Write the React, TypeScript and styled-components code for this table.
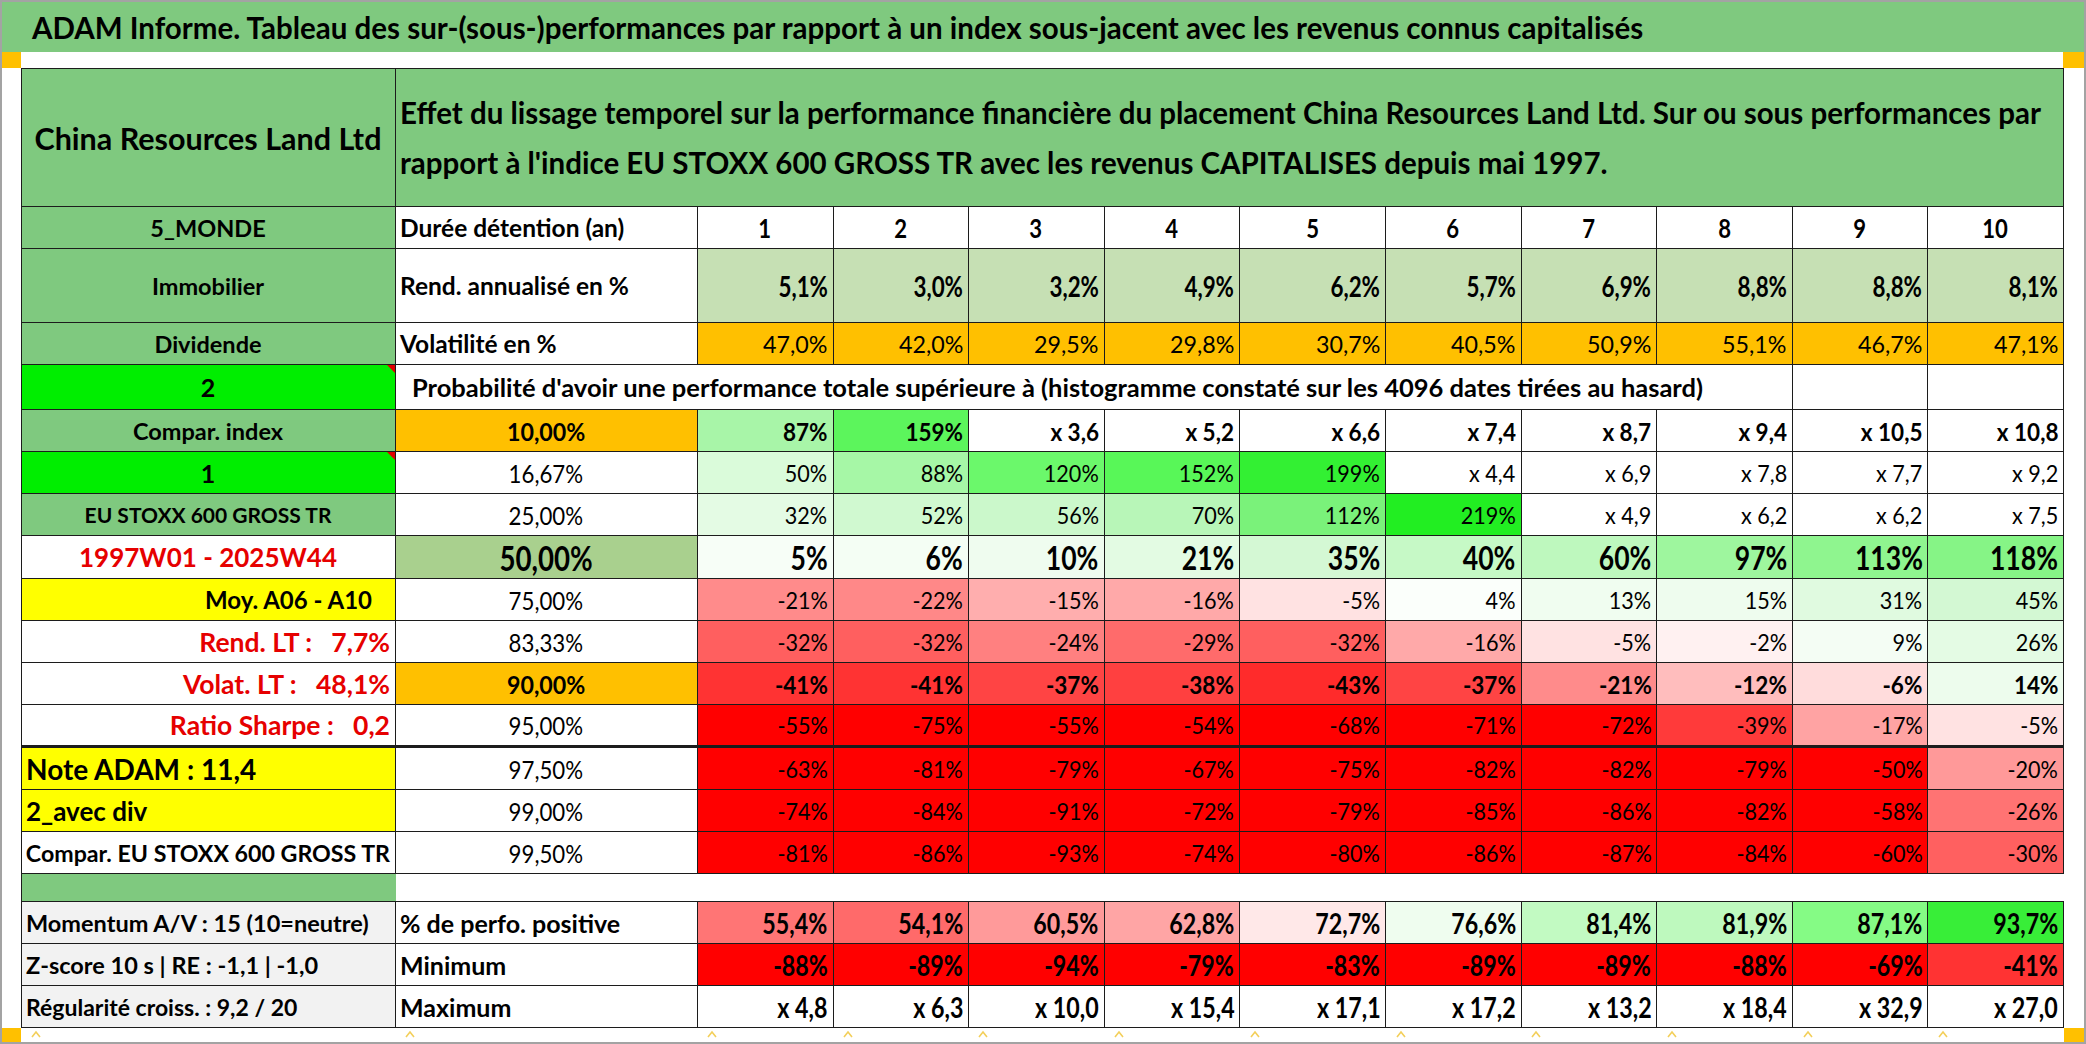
import React from 'react';
import styled, { createGlobalStyle } from 'styled-components';

const FONT = `Lato, "Open Sans", "Liberation Sans", sans-serif`;
const GREEN = '#7fc97f';
const LIME = '#00ee00';
const ORANGE = '#ffc000';
const YELLOW = '#ffff00';
const GREY = '#f2f2f2';
const R = '#ff0000';
const W = '#ffffff';
const LINE = '#1c1c1c';

const GlobalStyle = createGlobalStyle`
  body {
    margin: 0;
    background: #ffffff;
    font-family: ${FONT};
    color: #000000;
  }
`;

const Frame = styled.div`
  width: 2086px;
  height: 1044px;
  box-sizing: border-box;
  border: 2px solid #a3a3a3;
  display: flex;
  flex-direction: column;
  overflow: hidden;
`;

const TitleBar = styled.div`
  height: 50px;
  flex: none;
  background: ${GREEN};
  display: flex;
  align-items: center;
  padding-left: 30px;
  font-size: 29.5px;
  font-weight: 700;
  white-space: nowrap;
`;

const HandleRow = styled.div<{ $h: number }>`
  height: ${(p) => p.$h}px;
  flex: none;
  display: flex;
  align-items: stretch;
`;

const Handle = styled.div<{ $w: number }>`
  width: ${(p) => p.$w}px;
  flex: none;
  background: ${ORANGE};
`;

const Body = styled.div`
  display: flex;
  flex: none;
`;

const Gutter = styled.div<{ $w?: number }>`
  width: ${(p) => (p.$w ? `${p.$w}px` : 'auto')};
  flex: ${(p) => (p.$w ? 'none' : '1')};
`;

const COLS = '374px 302px repeat(4, 1fr) 146px repeat(5, 1fr)';

const Sheet = styled.div`
  width: 2043px;
  flex: none;
  box-sizing: border-box;
  display: grid;
  grid-template-columns: ${COLS};
  grid-template-rows: 138px 42px 74px 42px 45px 42px 42px 42px 43px 42px 42px 42px 43px 42px 42px 42px 28px 42px 42px 42px;
  border-top: 1px solid ${LINE};
  border-left: 1px solid ${LINE};
`;

const MarkStrip = styled.div`
  width: 2043px;
  flex: none;
  display: grid;
  grid-template-columns: ${COLS};
`;

const Mark = styled.div`
  padding-left: 9px;
  svg {
    display: block;
    margin-top: 2px;
  }
`;

type Align = 'left' | 'center' | 'right';
const justify = { left: 'flex-start', center: 'center', right: 'flex-end' };
const origin = { left: 'left center', center: 'center', right: 'right center' };

// Excel's narrow, tall figures: text is drawn at full height then squeezed sideways
const Txt = styled.span`
  display: inline-block;
`;

type CellProps = {
  $bg?: string;
  $align?: Align;
  $size?: number;
  $bold?: boolean;
  $color?: string;
  $span?: number;
  $thick?: boolean;
  $padL?: number;
  $padR?: number;
  $sq?: number;
};

const Cell = styled.div<CellProps>`
  position: relative;
  box-sizing: border-box;
  display: flex;
  align-items: center;
  justify-content: ${(p) => justify[p.$align ?? 'right']};
  grid-column: span ${(p) => p.$span ?? 1};
  background: ${(p) => p.$bg ?? W};
  color: ${(p) => p.$color ?? '#000'};
  font-size: ${(p) => p.$size ?? 23.5}px;
  font-weight: ${(p) => (p.$bold ? 700 : 400)};
  padding-left: ${(p) => p.$padL ?? 4}px;
  padding-right: ${(p) => p.$padR ?? 5}px;
  border-right: 1px solid ${LINE};
  border-bottom: ${(p) => (p.$thick ? 3 : 1)}px solid ${LINE};
  white-space: nowrap;
  overflow: hidden;

  & > ${Txt} {
    flex: none;
    transform: scaleX(${(p) => p.$sq ?? 1});
    transform-origin: ${(p) => origin[p.$align ?? 'right']};
  }
`;

const IntroCell = styled(Cell)`
  line-height: 50px;
  font-size: 29.5px;
  font-weight: 700;
  padding-left: 4px;
`;

const Gap = styled.div<{ $bg?: string; $span?: number }>`
  grid-column: span ${(p) => p.$span ?? 1};
  background: ${(p) => p.$bg ?? W};
  border-bottom: 1px solid ${LINE};
`;

const CommentMark = styled.i`
  position: absolute;
  top: 0;
  right: 0;
  width: 0;
  height: 0;
  border-left: 8px solid transparent;
  border-top: 8px solid #e00000;
`;

type Val = [string, string];
type DataRow = {
  label: string;
  labelProps: CellProps;
  key: string;
  keyProps: CellProps;
  values: Val[];
  valueProps: CellProps;
  mark?: boolean;
  thick?: boolean;
};

const red = (list: string[], last: Val): Val[] => [...list.map((t) => [t, R] as Val), last];
const plain = (list: string[]): Val[] => list.map((t) => [t, W] as Val);

const REG: CellProps = { $size: 23.5, $sq: 0.92 };
const BOLD: CellProps = { $bold: true, $size: 25, $sq: 0.9 };
const BIG: CellProps = { $bold: true, $size: 28, $sq: 0.83 };
const PCT: CellProps = { $align: 'center', $size: 25, $sq: 0.89 };
const PCT_BOLD: CellProps = { $align: 'center', $bold: true, $size: 25, $sq: 0.93 };
const NAME: CellProps = { $bg: GREEN, $align: 'center', $bold: true, $size: 23.5 };
const KEY: CellProps = { $align: 'left', $bold: true, $size: 24.5 };
const STAT: CellProps = { $bold: true, $size: 26.5, $color: '#e60000' };
const NOTE: CellProps = { $bg: YELLOW, $align: 'left', $bold: true, $size: 26 };
const FOOT: CellProps = { $bg: GREY, $align: 'left', $bold: true, $size: 23.5 };
const FOOT_KEY: CellProps = { $align: 'left', $bold: true, $size: 25 };

const rows: DataRow[] = [
  {
    label: 'Compar. index',
    labelProps: NAME,
    key: '10,00%',
    keyProps: { ...PCT_BOLD, $bg: ORANGE },
    values: [['87%', '#a8f5a8'], ['159%', '#5cf55c'], ...plain(['x 3,6', 'x 5,2', 'x 6,6', 'x 7,4', 'x 8,7', 'x 9,4', 'x 10,5', 'x 10,8'])],
    valueProps: BOLD,
  },
  {
    label: '1',
    labelProps: { ...NAME, $bg: LIME, $size: 25 },
    mark: true,
    key: '16,67%',
    keyProps: PCT,
    values: [['50%', '#dafbda'], ['88%', '#a6f7a6'], ['120%', '#6bf86b'], ['152%', '#58f758'], ['199%', '#33f033'], ...plain(['x 4,4', 'x 6,9', 'x 7,8', 'x 7,7', 'x 9,2'])],
    valueProps: REG,
  },
  {
    label: 'EU STOXX 600 GROSS TR',
    labelProps: { ...NAME, $size: 21 },
    key: '25,00%',
    keyProps: PCT,
    values: [['32%', '#e4fbe4'], ['52%', '#d0f9d0'], ['56%', '#cbf8cb'], ['70%', '#b8f6b8'], ['112%', '#7af27a'], ['219%', '#22ee22'], ...plain(['x 4,9', 'x 6,2', 'x 6,2', 'x 7,5'])],
    valueProps: REG,
  },
  {
    label: '1997W01 - 2025W44',
    labelProps: { $align: 'center', $bold: true, $size: 26, $color: '#e60000' },
    key: '50,00%',
    keyProps: { $bg: '#a9d08e', $align: 'center', $bold: true, $size: 35, $sq: 0.79 },
    values: [['5%', '#f7fef7'], ['6%', '#f4fef4'], ['10%', '#effcef'], ['21%', '#e3fbe3'], ['35%', '#d4f8d4'], ['40%', '#c6f9c6'], ['60%', '#bef8be'], ['97%', '#9ef69e'], ['113%', '#8ff58f'], ['118%', '#86f486']],
    valueProps: { $bold: true, $size: 32, $sq: 0.83 },
  },
  {
    label: 'Moy. A06 - A10',
    labelProps: { $bg: YELLOW, $bold: true, $size: 24, $padR: 23 },
    key: '75,00%',
    keyProps: PCT,
    values: [['-21%', '#ff8b8b'], ['-22%', '#ff8888'], ['-15%', '#ffaeae'], ['-16%', '#ffa9a9'], ['-5%', '#ffe2e2'], ['4%', '#fbfffb'], ['13%', '#f0fdf0'], ['15%', '#eefcee'], ['31%', '#e0fae0'], ['45%', '#d3f8d3']],
    valueProps: REG,
  },
  {
    label: 'Rend. LT :\u00a0\u00a0\u00a07,7%',
    labelProps: STAT,
    key: '83,33%',
    keyProps: PCT,
    values: [['-32%', '#ff5f5f'], ['-32%', '#ff5f5f'], ['-24%', '#ff8080'], ['-29%', '#ff6b6b'], ['-32%', '#ff5f5f'], ['-16%', '#ffa9a9'], ['-5%', '#ffe2e2'], ['-2%', '#fff1f1'], ['9%', '#f4fdf4'], ['26%', '#e4fbe4']],
    valueProps: REG,
  },
  {
    label: 'Volat. LT :\u00a0\u00a0\u00a048,1%',
    labelProps: STAT,
    key: '90,00%',
    keyProps: { ...PCT_BOLD, $bg: ORANGE },
    values: [['-41%', '#ff3333'], ['-41%', '#ff3333'], ['-37%', '#ff4444'], ['-38%', '#ff4040'], ['-43%', '#ff2b2b'], ['-37%', '#ff4444'], ['-21%', '#ff8b8b'], ['-12%', '#ffbdbd'], ['-6%', '#ffdcdc'], ['14%', '#edfced']],
    valueProps: BOLD,
  },
  {
    label: 'Ratio Sharpe :\u00a0\u00a0\u00a00,2',
    labelProps: STAT,
    key: '95,00%',
    keyProps: PCT,
    values: [...red(['-55%', '-75%', '-55%', '-54%', '-68%', '-71%', '-72%'], ['-39%', '#ff3a3a']), ['-17%', '#ffa3a3'], ['-5%', '#ffe2e2']],
    valueProps: REG,
    thick: true,
  },
  {
    label: 'Note ADAM : 11,4',
    labelProps: { ...NOTE, $size: 28 },
    key: '97,50%',
    keyProps: PCT,
    values: red(['-63%', '-81%', '-79%', '-67%', '-75%', '-82%', '-82%', '-79%', '-50%'], ['-20%', '#ff9999']),
    valueProps: REG,
  },
  {
    label: '2_avec div',
    labelProps: NOTE,
    key: '99,00%',
    keyProps: PCT,
    values: red(['-74%', '-84%', '-91%', '-72%', '-79%', '-85%', '-86%', '-82%', '-58%'], ['-26%', '#ff7373']),
    valueProps: REG,
  },
  {
    label: 'Compar. EU STOXX 600 GROSS TR',
    labelProps: { $bold: true, $size: 23.2 },
    key: '99,50%',
    keyProps: PCT,
    values: red(['-81%', '-86%', '-93%', '-74%', '-80%', '-86%', '-87%', '-84%', '-60%'], ['-30%', '#ff6060']),
    valueProps: REG,
  },
];

const footRows: DataRow[] = [
  {
    label: 'Momentum A/V : 15 (10=neutre)',
    labelProps: FOOT,
    key: '% de perfo. positive',
    keyProps: FOOT_KEY,
    values: [['55,4%', '#ff7575'], ['54,1%', '#ff6a6a'], ['60,5%', '#ff9a9a'], ['62,8%', '#ffa5a5'], ['72,7%', '#ffe8e8'], ['76,6%', '#effdef'], ['81,4%', '#c2fac2'], ['81,9%', '#bef9be'], ['87,1%', '#85fb85'], ['93,7%', '#38ee38']],
    valueProps: BIG,
  },
  {
    label: 'Z-score 10 s | RE : -1,1 | -1,0',
    labelProps: FOOT,
    key: 'Minimum',
    keyProps: FOOT_KEY,
    values: red(['-88%', '-89%', '-94%', '-79%', '-83%', '-89%', '-89%', '-88%', '-69%'], ['-41%', '#ff3333']),
    valueProps: BIG,
  },
  {
    label: 'Régularité croiss. : 9,2 / 20',
    labelProps: { ...FOOT, $size: 23 },
    key: 'Maximum',
    keyProps: FOOT_KEY,
    values: plain(['x 4,8', 'x 6,3', 'x 10,0', 'x 15,4', 'x 17,1', 'x 17,2', 'x 13,2', 'x 18,4', 'x 32,9', 'x 27,0']),
    valueProps: BIG,
  },
];

const topRows: { label: string; key: string; values: Val[]; valueProps: CellProps }[] = [
  {
    label: 'Immobilier',
    key: 'Rend. annualisé en %',
    values: ['5,1%', '3,0%', '3,2%', '4,9%', '6,2%', '5,7%', '6,9%', '8,8%', '8,8%', '8,1%'].map((t) => [t, '#c6e0b4'] as Val),
    valueProps: { $bold: true, $size: 28, $sq: 0.8 },
  },
  {
    label: 'Dividende',
    key: 'Volatilité en %',
    values: ['47,0%', '42,0%', '29,5%', '29,8%', '30,7%', '40,5%', '50,9%', '55,1%', '46,7%', '47,1%'].map((t) => [t, ORANGE] as Val),
    valueProps: { $size: 24, $sq: 0.97 },
  },
];

const Row = ({ row }: { row: DataRow }) => (
  <>
    <Cell {...row.labelProps} $thick={row.thick}>
      <Txt>{row.label}</Txt>
      {row.mark && <CommentMark />}
    </Cell>
    <Cell {...row.keyProps} $thick={row.thick}>
      <Txt>{row.key}</Txt>
    </Cell>
    {row.values.map(([text, bg], i) => (
      <Cell key={i} {...row.valueProps} $bg={bg} $thick={row.thick}>
        <Txt>{text}</Txt>
      </Cell>
    ))}
  </>
);

const Tick = () => (
  <Mark>
    <svg width="12" height="8" viewBox="0 0 12 8">
      <path d="M2 7 L6 2 L10 7" fill="none" stroke="#f3cf5a" strokeWidth="1.6" />
    </svg>
  </Mark>
);

const App = () => {
  return (
    <>
      <GlobalStyle />
      <Frame>
        <TitleBar>
          ADAM Informe. Tableau des sur-(sous-)performances par rapport à un index sous-jacent avec les revenus connus capitalisés
        </TitleBar>
        <HandleRow $h={16}>
          <Handle $w={19} />
          <Gutter />
          <Handle $w={21} />
        </HandleRow>
        <Body>
          <Gutter $w={19} />
          <Sheet>
            <Cell $bg={GREEN} $align="center" $bold $size={30.5}>
              <Txt>China Resources Land Ltd</Txt>
            </Cell>
            <IntroCell $bg={GREEN} $align="left" $span={11}>
              <Txt>
                Effet du lissage temporel sur la performance financière du placement China Resources Land Ltd. Sur ou sous performances par
                <br />
                rapport à l'indice EU STOXX 600 GROSS TR avec les revenus CAPITALISES depuis mai 1997.
              </Txt>
            </IntroCell>

            <Cell {...NAME}>
              <Txt>5_MONDE</Txt>
            </Cell>
            <Cell {...KEY}>
              <Txt>Durée détention (an)</Txt>
            </Cell>
            {Array.from({ length: 10 }, (_, i) => (
              <Cell key={i} $align="center" $bold $size={26} $sq={0.85}>
                <Txt>{i + 1}</Txt>
              </Cell>
            ))}

            {topRows.map((r) => (
              <React.Fragment key={r.label}>
                <Cell {...NAME}>
                  <Txt>{r.label}</Txt>
                </Cell>
                <Cell {...KEY}>
                  <Txt>{r.key}</Txt>
                </Cell>
                {r.values.map(([text, bg], i) => (
                  <Cell key={i} {...r.valueProps} $bg={bg}>
                    <Txt>{text}</Txt>
                  </Cell>
                ))}
              </React.Fragment>
            ))}

            <Cell {...NAME} $bg={LIME} $size={25}>
              <Txt>2</Txt>
              <CommentMark />
            </Cell>
            <Cell $align="left" $bold $size={25.5} $span={9} $padL={16}>
              <Txt>Probabilité d'avoir une performance totale supérieure à (histogramme constaté sur les 4096 dates tirées au hasard)</Txt>
            </Cell>
            <Cell />
            <Cell />

            {rows.map((r, i) => (
              <Row key={i} row={r} />
            ))}

            <Gap $bg={GREEN} />
            <Gap $span={11} />

            {footRows.map((r, i) => (
              <Row key={i} row={r} />
            ))}
          </Sheet>
          <Gutter />
        </Body>
        <HandleRow $h={14}>
          <Handle $w={19} />
          <MarkStrip>
            {Array.from({ length: 12 }, (_, i) => (
              <Tick key={i} />
            ))}
          </MarkStrip>
          <Gutter />
          <Handle $w={21} />
        </HandleRow>
      </Frame>
    </>
  );
};

export default App;
